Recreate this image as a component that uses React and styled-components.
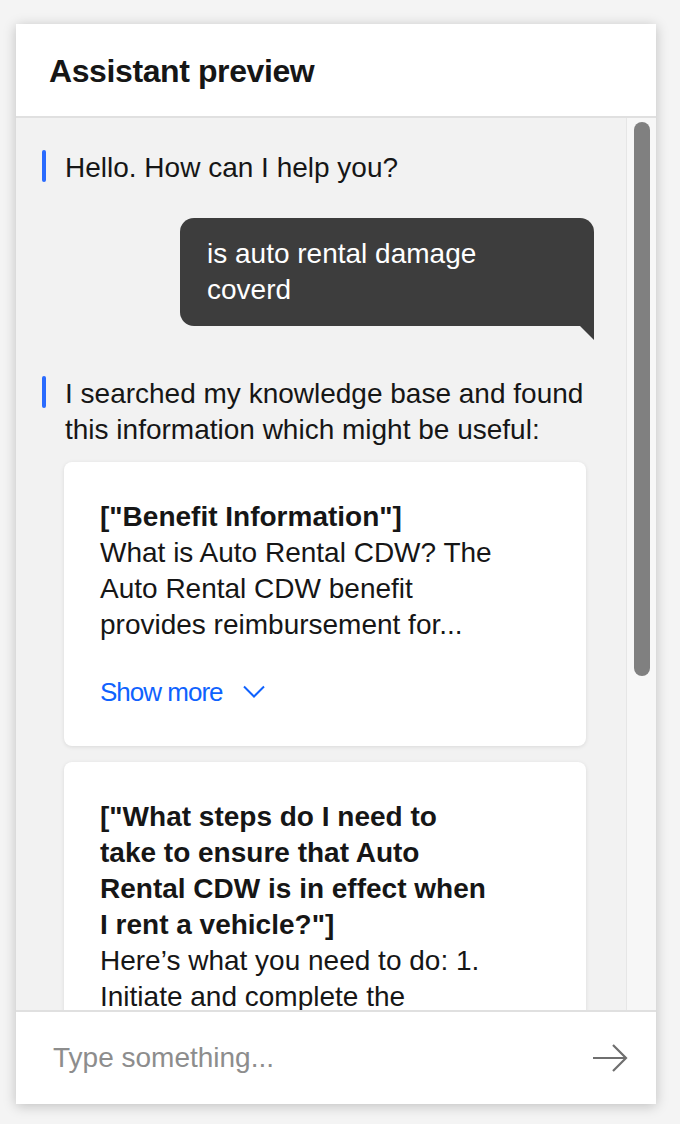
import styled, { createGlobalStyle } from "styled-components"

const Global = createGlobalStyle`
  * { box-sizing: border-box; }
  body {
    margin: 0;
    background: #f4f4f4;
    font-family: "Liberation Sans", Arial, sans-serif;
    color: #161616;
  }
`

const Page = styled.div`
  padding: 24px 16px 20px;
`

const Panel = styled.div`
  width: 640px;
  height: 1080px;
  display: flex;
  flex-direction: column;
  background: #f2f2f2;
  box-shadow: 0 2px 12px rgba(0, 0, 0, 0.22);
`

const Header = styled.div`
  height: 94px;
  flex: none;
  display: flex;
  align-items: center;
  padding: 2px 33px 0;
  background: #fff;
  border-bottom: 2px solid #e0e0e0;
`

const Title = styled.h1`
  margin: 0;
  font-size: 32px;
  font-weight: 700;
  letter-spacing: -0.4px;
`

const Body = styled.div`
  flex: 1;
  min-height: 0;
  display: flex;
`

const Messages = styled.div`
  flex: 1;
  overflow: hidden;
  display: flex;
  flex-direction: column;
  padding: 32px 0 0 26px;
`

const Track = styled.div`
  width: 30px;
  flex: none;
  background: #f7f7f7;
  border-left: 1px solid #e6e6e6;
  padding: 4px 6px 0 7px;
`

const Thumb = styled.div`
  height: 554px;
  border-radius: 8px;
  background: #808080;
`

const BotRow = styled.div`
  display: flex;
  gap: 19px;
  margin-bottom: ${(p) => p.$mb || 0}px;
`

const Bar = styled.div`
  width: 4px;
  height: 32px;
  flex: none;
  border-radius: 2px;
  background: #2a6bfe;
`

const BotText = styled.div`
  width: 524px;
  font-size: 28px;
  line-height: 36px;
`

const Column = styled.div`
  display: flex;
  flex-direction: column;
  gap: 16px;
  padding-left: 22px;
`

const UserWrap = styled.div`
  align-self: flex-end;
  margin: 32px 32px 50px 0;
  position: relative;
`

const Bubble = styled.div`
  width: 414px;
  padding: 18px 60px 18px 27px;
  background: #3d3d3d;
  color: #fff;
  font-size: 28px;
  line-height: 36px;
  border-radius: 14px 14px 0 14px;

  &::after {
    content: "";
    position: absolute;
    right: 0;
    bottom: -14px;
    border-top: 14px solid #3d3d3d;
    border-left: 14px solid transparent;
  }
`

const Card = styled.div`
  width: 522px;
  padding: 37px 36px 36px;
  background: #fff;
  border-radius: 8px;
  box-shadow: 0 1px 4px rgba(0, 0, 0, 0.1);
`

const CardText = styled.div`
  width: 395px;
  font-size: 28px;
  line-height: 36px;

  strong {
    display: block;
    font-weight: 700;
  }
`

const ShowMore = styled.button`
  display: flex;
  align-items: center;
  gap: 20px;
  margin-top: 31px;
  padding: 0;
  height: 36px;
  border: none;
  background: none;
  color: #0f62fe;
  font-family: inherit;
  font-size: 26px;
  letter-spacing: -1px;
  cursor: pointer;
`

const Footer = styled.div`
  height: 94px;
  flex: none;
  display: flex;
  align-items: center;
  justify-content: space-between;
  padding: 0 28px 0 37px;
  background: #fff;
  border-top: 2px solid #e0e0e0;
`

const Placeholder = styled.div`
  font-size: 28px;
  color: #8d8d8d;
`

const Chevron = () => (
  <svg width="22" height="14" viewBox="0 0 22 14" fill="none">
    <path d="M1 1.5 L11 11.5 L21 1.5" stroke="#0f62fe" strokeWidth="2" />
  </svg>
)

const Arrow = () => (
  <svg width="36" height="30" viewBox="0 0 36 30" fill="none">
    <path d="M1 15 H34 M21 2 L34 15 L21 28" stroke="#6f6f6f" strokeWidth="2.2" />
  </svg>
)

const App = () => {
  return (
    <>
      <Global />
      <Page>
        <Panel>
          <Header>
            <Title>Assistant preview</Title>
          </Header>
          <Body>
            <Messages>
              <BotRow>
                <Bar />
                <BotText>Hello. How can I help you?</BotText>
              </BotRow>
              <UserWrap>
                <Bubble>is auto rental damage coverd</Bubble>
              </UserWrap>
              <BotRow $mb={14}>
                <Bar />
                <BotText>
                  I searched my knowledge base and found this information which
                  might be useful:
                </BotText>
              </BotRow>
              <Column>
                <Card>
                  <CardText>
                    <strong>["Benefit Information"]</strong>
                    What is Auto Rental CDW? The Auto Rental CDW benefit provides
                    reimbursement for...
                  </CardText>
                  <ShowMore>
                    Show more
                    <Chevron />
                  </ShowMore>
                </Card>
                <Card>
                  <CardText>
                    <strong>
                      ["What steps do I need to take to ensure that Auto Rental
                      CDW is in effect when I rent a vehicle?"]
                    </strong>
                    Here’s what you need to do: 1. Initiate and complete the
                  </CardText>
                </Card>
              </Column>
            </Messages>
            <Track>
              <Thumb />
            </Track>
          </Body>
          <Footer>
            <Placeholder>Type something...</Placeholder>
            <Arrow />
          </Footer>
        </Panel>
      </Page>
    </>
  )
}

export default App
